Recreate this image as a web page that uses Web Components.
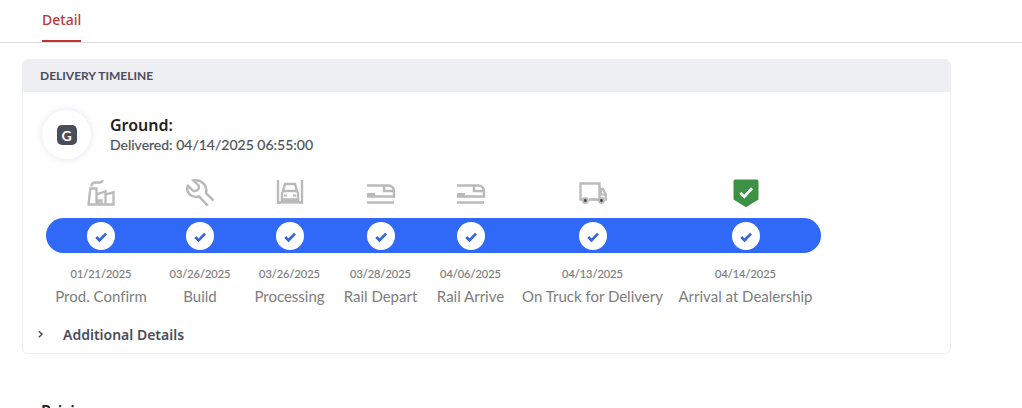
<!DOCTYPE html>
<html lang="en">
<head>
<meta charset="utf-8">
<title>Vehicle detail</title>
<style>
html { scrollbar-width: none; }
body { margin: 0; background: #fff; font-family: Lato, "Noto Sans", sans-serif; font-variant-ligatures: none; color: #4a4d58; --heading-font: "Noto Sans", Lato, sans-serif; }
</style>
</head>
<body>
<vehicle-page></vehicle-page>

<template id="page-template">
<style>
:host { display: block; }
main { padding: 16px 71px 0 22px; }
h2 { margin: 46px 0 0 19px; font-family: var(--heading-font); font-size: 16px; line-height: 22px; font-weight: 600; color: #222; }
</style>
<tab-bar><tab-link>Detail</tab-link></tab-bar>
<main>
  <info-card>
    <span slot="title">DELIVERY TIMELINE</span>
    <status-summary>
      <span slot="title">Ground:</span>
      <span slot="detail">Delivered: 04/14/2025 06:55:00</span>
    </status-summary>
    <delivery-timeline>
      <delivery-step icon="factory" date="01/21/2025">Prod. Confirm</delivery-step>
      <delivery-step icon="wrench" date="03/26/2025">Build</delivery-step>
      <delivery-step icon="garage" date="03/26/2025">Processing</delivery-step>
      <delivery-step icon="train" date="03/28/2025">Rail Depart</delivery-step>
      <delivery-step icon="train" date="04/06/2025">Rail Arrive</delivery-step>
      <delivery-step icon="truck" date="04/13/2025">On Truck for Delivery</delivery-step>
      <delivery-step icon="arrived" date="04/14/2025">Arrival at Dealership</delivery-step>
    </delivery-timeline>
    <detail-toggle>Additional Details</detail-toggle>
  </info-card>
  <h2>Pricing</h2>
</main>
</template>

<template id="tabs-template">
<style>
:host { display: block; border-bottom: 1px solid #dedede; }
nav { display: flex; padding: 0 42px; }
</style>
<nav><slot></slot></nav>
</template>

<template id="tab-template">
<style>
:host { display: block; }
a { display: block; padding: 9px 0 10px; border-bottom: 2px solid #c5302d; font-family: var(--heading-font); font-size: 14px; line-height: 21px; font-weight: 500; color: #b83a3a; text-decoration: none; }
</style>
<a href="#detail"><slot></slot></a>
</template>

<template id="card-template">
<style>
:host { display: block; border: 1px solid #efeff2; border-radius: 6px; overflow: hidden; }
header { padding: 0 17px; background: #eeeff3; font-size: 12px; line-height: 32px; font-weight: 700; color: #4a4d5c; }
.body { padding: 18px 17px 6px; }
</style>
<header><slot name="title"></slot></header>
<div class="body"><slot></slot></div>
</template>

<template id="summary-template">
<style>
:host { display: flex; align-items: center; gap: 19px; padding-left: 2px; }
.badge { display: grid; place-items: center; width: 49px; height: 49px; border-radius: 50%; background: #fff; box-shadow: 0 0 8px #e4e5ee; }
.letter { width: 20px; height: 20px; border-radius: 5px; background: #4a4e59; color: #fff; font-size: 14px; line-height: 22px; font-weight: 700; text-align: center; }
strong, span.detail { display: block; line-height: 20px; }
strong { font-family: var(--heading-font); font-size: 16px; font-weight: 600; color: #222; }
span.detail { font-size: 14px; color: #4e5159; -webkit-text-stroke: 0.2px; }
</style>
<div class="badge"><div class="letter">G</div></div>
<div>
  <strong><slot name="title"></slot></strong>
  <span class="detail"><slot name="detail"></slot></span>
</div>
</template>

<template id="timeline-template">
<style>
:host { display: grid; justify-content: start; padding: 19px 6px 0; }
.track, .steps { grid-area: 1 / 1; }
.track { height: 35px; margin-top: 40px; border-radius: 18px; background: #3068f8; }
.steps { display: grid; grid-template-columns: 90px 68px 71px 71px 69px 135px 131px; column-gap: 20px; padding: 0 10px; justify-items: center; }
</style>
<div class="track"></div><div class="steps"><slot></slot></div>
</template>

<template id="step-template">
<style>
:host { display: flex; flex-direction: column; align-items: center; width: 100%; white-space: nowrap; color: #7d7d7d; }
.icon { display: block; width: 30px; height: 30px; color: #bababa; }
.check { display: block; width: 28px; height: 28px; margin: 14px 0; }
time { font-size: 11px; line-height: 20px; -webkit-text-stroke: 0.2px; }
.label { font-size: 15px; line-height: 24px; }
</style>
<svg class="icon" viewBox="0 0 30 30" fill="none" stroke="currentColor" stroke-width="2.3" aria-hidden="true"></svg>
<svg class="check" viewBox="0 0 28 28" aria-hidden="true"><circle cx="14" cy="14" r="14" fill="#fff"/><path d="M9.3 15l3.2 3.4 6.5-6.8" fill="none" stroke="#3564e0" stroke-width="2.7"/></svg>
<time></time>
<span class="label"><slot></slot></span>
</template>

<template id="toggle-template">
<style>
:host { display: block; margin-left: -2px; padding-top: 15px; }
button { display: flex; align-items: center; gap: 20px; margin: 0; padding: 0; border: 0; background: none; font: 600 14px/24px var(--heading-font); font-variant-ligatures: none; color: #4a4d5c; }
svg { width: 5px; height: 10px; }
</style>
<button type="button" aria-expanded="false"><svg viewBox="0 0 5 10" fill="none" stroke="currentColor" stroke-width="1.5" aria-hidden="true"><path d="M.8 1.2L4 4.2.8 7.2"/></svg><span><slot></slot></span></button>
</template>

<script>
const stepIcons = {
  factory: '<path d="M2.5 26.5h25V14.3l-8 2.2v-3.2l-9 3V10.5H4.3zM10.5 26v-9.5M19.5 26v-9M12.5 26v-3.5h3V26M5.5 8.5c0-3 1.8-4 4-4h4c2 0 3-1 3-2.5"/>',
  wrench: '<path stroke-width="2.5" d="M28.5 22.5L21 15.2C22.8 8 17 1 8.5 2.4l5.2 5.2c.7 3.7-1.7 6-5.4 5.3L3 7.8C-.2 14.2 7 20.7 14 18.5l8.8 9.2"/>',
  garage: '<path d="M3 2v24M27 2v24M1.8 24.5H6M24 24.5h4.2M10 6h10l2 7H8zM8 13l-1 2v9h16v-9l-1-2M8 21.5h14" stroke-width="2.4"/><path d="M9 17.5h3M18 17.5h3M3 24.5h24" stroke-width="2.2"/>',
  train: '<path d="M1 7.5h21c4 0 6 3 6 6v5H1M1 24.5h27M18 8v5h9M1 16.2h8" stroke-width="2.5"/>',
  truck: '<path d="M4.5 21.5H2.5v-16h19v16H11M21.5 11h3.3l3 5v5.5h-1" stroke-width="2.3"/><path d="M11 21.5h9M23 11.5v5h4" stroke-width="1.8"/><circle cx="7.3" cy="22.5" r="3.4" fill="#bababa" stroke="none"/><circle cx="23.4" cy="22.5" r="3.4" fill="#bababa" stroke="none"/><circle cx="7.3" cy="22.5" r="1.4" fill="#444" stroke="none"/><circle cx="23.4" cy="22.5" r="1.4" fill="#444" stroke="none"/>',
  arrived: '<path d="M2.5 3q0-1.5 1.5-1.5h22q1.5 0 1.5 1.5v18.5L15 29.2 2.5 21.5z" fill="#3d9144" stroke="none"/><path d="M9.3 14.8l4 4L21 10.3" stroke="#fff" stroke-width="2.8"/>'
};

class TemplateElement extends HTMLElement {
  constructor() {
    super();
    this.attachShadow({ mode: 'open' }).append(
      document.getElementById(this.constructor.template).content.cloneNode(true));
  }
}

class DeliveryStep extends TemplateElement {
  static template = 'step-template';
  connectedCallback() {
    this.shadowRoot.querySelector('.icon').innerHTML = stepIcons[this.getAttribute('icon')];
    this.shadowRoot.querySelector('time').textContent = this.getAttribute('date');
  }
}

customElements.define('tab-bar', class extends TemplateElement { static template = 'tabs-template'; });
customElements.define('tab-link', class extends TemplateElement { static template = 'tab-template'; });
customElements.define('info-card', class extends TemplateElement { static template = 'card-template'; });
customElements.define('status-summary', class extends TemplateElement { static template = 'summary-template'; });
customElements.define('delivery-step', DeliveryStep);
customElements.define('delivery-timeline', class extends TemplateElement { static template = 'timeline-template'; });
customElements.define('detail-toggle', class extends TemplateElement { static template = 'toggle-template'; });
customElements.define('vehicle-page', class extends TemplateElement { static template = 'page-template'; });
</script>
</body>
</html>
